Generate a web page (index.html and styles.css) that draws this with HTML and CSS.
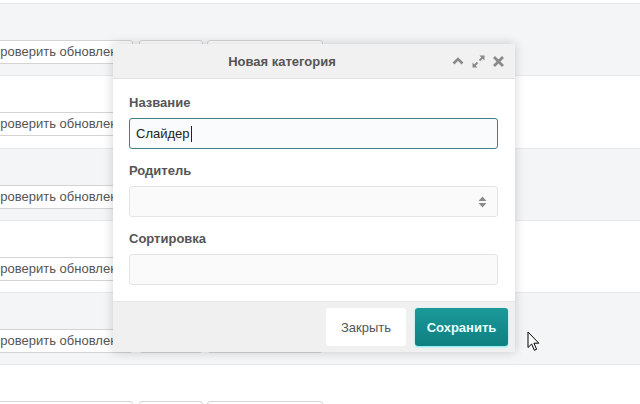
FILE: index.html
```html
<!DOCTYPE html>
<html lang="ru">
<head>
<meta charset="utf-8">
<title>Новая категория</title>
<link rel="stylesheet" href="styles.css">
</head>
<body>
<div class="page">
  <div class="top-strip"></div>
  <div class="row gray">
    <div class="btn-group"><span class="btn wide">Проверить обновления</span><span class="btn mid"></span><span class="btn long"></span></div>
  </div>
  <div class="row">
    <div class="btn-group"><span class="btn wide">Проверить обновления</span><span class="btn mid"></span><span class="btn long"></span></div>
  </div>
  <div class="row gray">
    <div class="btn-group"><span class="btn wide">Проверить обновления</span><span class="btn mid"></span><span class="btn long"></span></div>
  </div>
  <div class="row">
    <div class="btn-group"><span class="btn wide">Проверить обновления</span><span class="btn mid"></span><span class="btn long"></span></div>
  </div>
  <div class="row gray">
    <div class="btn-group"><span class="btn wide">Проверить обновления</span><span class="btn mid"></span><span class="btn long"></span></div>
  </div>
  <div class="row">
    <div class="btn-group"><span class="btn wide">Проверить обновления</span><span class="btn mid"></span><span class="btn long"></span></div>
  </div>
</div>

<div class="modal">
  <div class="modal-header">
    <div class="modal-title">Новая категория</div>
    <div class="modal-tools">
      <svg class="tool" width="12" height="10" viewBox="0 0 12 10"><path d="M1.5 7.5 L6 3 L10.5 7.5" fill="none" stroke="#8a8a8a" stroke-width="2.6"/></svg>
      <svg class="tool" width="13" height="13" viewBox="0 0 13 13"><path d="M7.5 0.5 H12.5 V5.5 Z M0.5 7.5 V12.5 H5.5 Z" fill="#8a8a8a"/><path d="M10.5 2.5 L7.5 5.5 M2.5 10.5 L5.5 7.5" stroke="#8a8a8a" stroke-width="1.8"/></svg>
      <svg class="tool" width="11" height="11" viewBox="0 0 11 11"><path d="M2 2 L9 9 M9 2 L2 9" stroke="#8a8a8a" stroke-width="2.8" stroke-linecap="square"/></svg>
    </div>
  </div>
  <div class="modal-body">
    <div class="field">
      <div class="label">Название</div>
      <div class="input focused">Слайдер<span class="caret"></span></div>
    </div>
    <div class="field">
      <div class="label">Родитель</div>
      <div class="input select">
        <svg width="9" height="12" viewBox="0 0 9 12"><path d="M0.5 5 L4.5 0.5 L8.5 5 Z M0.5 7 L4.5 11.5 L8.5 7 Z" fill="#8a8a8a"/></svg>
      </div>
    </div>
    <div class="field">
      <div class="label">Сортировка</div>
      <div class="input"></div>
    </div>
  </div>
  <div class="modal-footer">
    <span class="fbtn close">Закрыть</span>
    <span class="fbtn save">Сохранить</span>
  </div>
</div>

<svg class="cursor" width="14" height="21" viewBox="0 0 14 21"><path d="M1 1 L1 16.5 L4.6 13 L7.4 19.3 L9.6 18.3 L6.9 12.2 L11.8 12.2 Z" fill="#fff" stroke="#000" stroke-width="1" stroke-linejoin="round"/></svg>
</body>
</html>
```

FILE: styles.css
```css
html, body {
  margin: 0;
  padding: 0;
  width: 640px;
  height: 404px;
  overflow: hidden;
  background: #fff;
  font-family: "Liberation Sans", Arial, sans-serif;
  font-size: 13px;
  color: #555;
}

.page {
  display: flex;
  flex-direction: column;
  height: 404px;
  overflow: hidden;
}

.top-strip {
  height: 3px;
  flex: none;
  background: #fff;
}

.row {
  height: 72.25px;
  box-sizing: border-box;
  border-top: 1px solid #e7e8ea;
  background: #fff;
  padding-top: 36px;
  flex: none;
}

.row.gray {
  background: #f4f5f7;
}

.btn-group {
  display: flex;
  gap: 6px;
  margin-left: -22px;
}

.btn {
  display: block;
  box-sizing: border-box;
  height: 24px;
  line-height: 22px;
  border: 1px solid #d4d4d4;
  border-radius: 3px;
  background: #fff;
  padding-left: 12px;
  white-space: nowrap;
  overflow: hidden;
  color: #555;
}

.btn.wide { width: 155px; }
.btn.mid { width: 64px; }
.btn.long { width: 116px; margin-left: -2px; }

.modal {
  position: absolute;
  left: 113px;
  top: 44px;
  width: 402px;
  height: 308px;
  background: #fff;
  box-shadow: 0 0 10px rgba(0, 0, 0, 0.18);
  display: flex;
  flex-direction: column;
}

.modal-header {
  height: 35px;
  flex: none;
  box-sizing: border-box;
  background: #f1f1f1;
  border-bottom: 1px solid #e2e2e2;
  display: flex;
  align-items: center;
}

.modal-title {
  flex: 1;
  text-align: center;
  font-weight: bold;
  color: #555;
}

.modal-tools {
  width: 64px;
  display: flex;
  align-items: center;
  gap: 8px;
  padding-left: 1px;
  box-sizing: border-box;
}

.tool { display: block; }

.modal-body {
  flex: 1;
  min-height: 0;
  padding: 16px 17px 0 16px;
}

.field {
  margin-bottom: 14px;
}

.field:last-child {
  margin-bottom: 0;
}

.label {
  font-weight: bold;
  line-height: 16px;
  margin-bottom: 7px;
  color: #555;
}

.input {
  height: 31px;
  box-sizing: border-box;
  border: 1px solid #e4e4e4;
  border-radius: 3px;
  background: #fafafa;
  padding: 0 6px;
  line-height: 29px;
  display: flex;
  align-items: center;
}

.input.focused {
  border-color: #3f7f86;
  background: #f9fbfc;
  color: #222;
}

.caret {
  display: inline-block;
  width: 1px;
  height: 16px;
  background: #222;
  margin-left: 1px;
}

.input.select {
  justify-content: flex-end;
  padding-right: 10px;
}

.modal-footer {
  height: 51px;
  flex: none;
  box-sizing: border-box;
  background: #f0f0f0;
  border-top: 1px solid #e6e6e6;
  display: flex;
  justify-content: flex-end;
  align-items: flex-start;
  gap: 9px;
  padding: 6px 7px 0 0;
}

.fbtn {
  display: flex;
  align-items: center;
  justify-content: center;
  height: 38px;
  box-sizing: border-box;
  border-radius: 3px;
}

.fbtn.close {
  width: 80px;
  background: #fff;
  color: #555;
}

.fbtn.save {
  width: 93px;
  background: linear-gradient(#1b9999, #0f7f81);
  color: #e8ffff;
  font-weight: bold;
  box-shadow: 0 1px 2px rgba(80, 240, 240, 0.8);
}

.cursor {
  position: absolute;
  left: 527px;
  top: 331px;
}
```
